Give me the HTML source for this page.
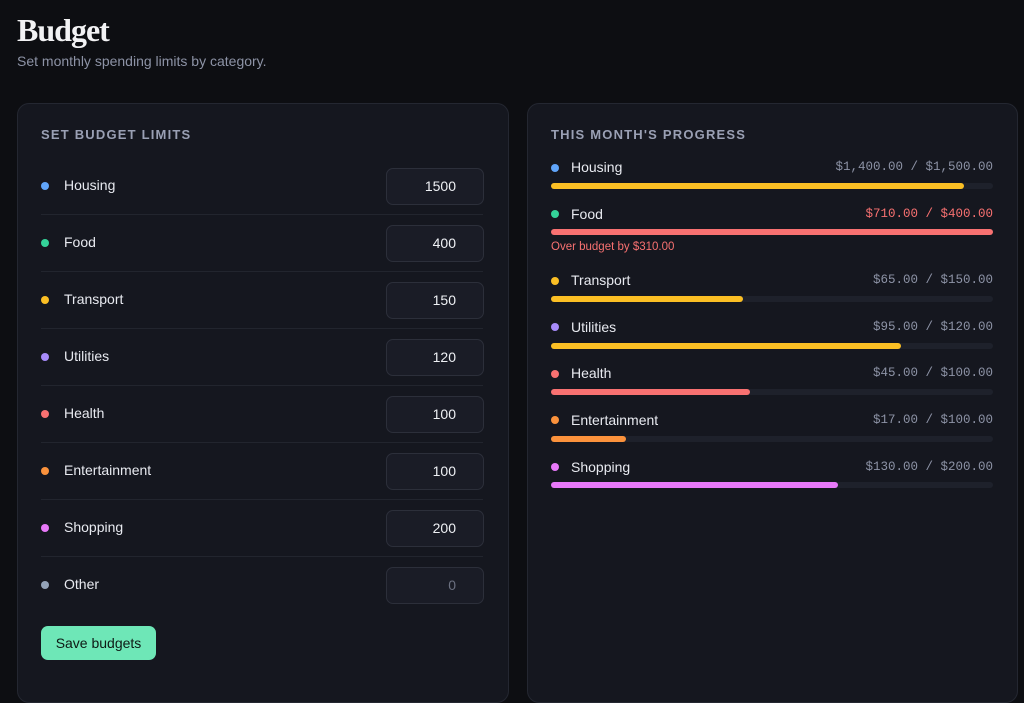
<!DOCTYPE html>
<html><head><style>
*{box-sizing:border-box;margin:0;padding:0}
body{width:1024px;height:678px;overflow:hidden;background:#0d0e12;font-family:"Liberation Sans",sans-serif;color:#e6e8ee;position:relative}
.abs{position:absolute}
h1{position:absolute;left:17px;top:12px;font-family:"Liberation Serif",serif;font-size:32px;font-weight:bold;letter-spacing:-1px;color:#f2f2f4}
.sub{left:17px;top:53px;font-size:14px;color:#8d93a6}
.card{position:absolute;top:103px;height:600px;background:#15171f;border:1px solid #242731;border-radius:12px}
.ttl{position:absolute;font-size:13px;font-weight:bold;letter-spacing:1.2px;color:#9aa0b4}
.dot{position:absolute;width:8px;height:8px;border-radius:50%}
.lbl{position:absolute;font-size:14px;color:#e8eaf0}
.inp{position:absolute;left:386px;width:98px;height:37px;border:1px solid #2c2f3a;border-radius:7px;background:#1a1c26;text-align:right;padding-right:27px;line-height:35px;font-size:14px;color:#eef0f4}
.div{position:absolute;left:41px;width:442px;height:1px;background:#22252e}
.amt{position:absolute;right:31px;font-family:"Liberation Mono",monospace;font-size:12.5px;color:#8d93a6}
.track{position:absolute;left:551px;width:442px;height:6px;border-radius:3px;background:#1e212b}
.fill{height:6px;border-radius:3px}
.btn{position:absolute;left:41px;top:626px;width:115px;height:34px;border-radius:7px;background:#6ee7b7;color:#0e1a15;font-size:14px;text-align:center;line-height:34px}
</style></head><body>
<h1>Budget</h1>
<div class="abs sub">Set monthly spending limits by category.</div>
<div class="card" style="left:17px;width:492px"></div>
<div class="card" style="left:527px;width:491px"></div>
<div class="ttl" style="left:41px;top:127px">SET BUDGET LIMITS</div>
<div class="ttl" style="left:551px;top:127px">THIS MONTH'S PROGRESS</div>

<div class="dot" style="left:41px;top:182px;background:#60a5fa"></div><div class="lbl" style="left:64px;top:177px">Housing</div><div class="inp" style="top:168px">1500</div><div class="div" style="top:214px"></div>
<div class="dot" style="left:41px;top:239px;background:#34d399"></div><div class="lbl" style="left:64px;top:234px">Food</div><div class="inp" style="top:225px">400</div><div class="div" style="top:271px"></div>
<div class="dot" style="left:41px;top:296px;background:#fbbf24"></div><div class="lbl" style="left:64px;top:291px">Transport</div><div class="inp" style="top:282px">150</div><div class="div" style="top:328px"></div>
<div class="dot" style="left:41px;top:353px;background:#a78bfa"></div><div class="lbl" style="left:64px;top:348px">Utilities</div><div class="inp" style="top:339px">120</div><div class="div" style="top:385px"></div>
<div class="dot" style="left:41px;top:410px;background:#f87171"></div><div class="lbl" style="left:64px;top:405px">Health</div><div class="inp" style="top:396px">100</div><div class="div" style="top:442px"></div>
<div class="dot" style="left:41px;top:467px;background:#fb923c"></div><div class="lbl" style="left:64px;top:462px">Entertainment</div><div class="inp" style="top:453px">100</div><div class="div" style="top:499px"></div>
<div class="dot" style="left:41px;top:524px;background:#e879f9"></div><div class="lbl" style="left:64px;top:519px">Shopping</div><div class="inp" style="top:510px">200</div><div class="div" style="top:556px"></div>
<div class="dot" style="left:41px;top:581px;background:#94a3b8"></div><div class="lbl" style="left:64px;top:576px">Other</div><div class="inp" style="top:567px;color:#6b7080">0</div>
<div class="btn">Save budgets</div>

<div class="dot" style="left:551px;top:164px;background:#60a5fa"></div><div class="lbl" style="left:571px;top:159px">Housing</div><div class="amt" style="top:160px">$1,400.00 / $1,500.00</div>
<div class="track" style="top:183px"><div class="fill" style="width:413px;background:#fbbf24"></div></div>
<div class="dot" style="left:551px;top:210px;background:#34d399"></div><div class="lbl" style="left:571px;top:206px">Food</div><div class="amt" style="top:207px;color:#f87171">$710.00 / $400.00</div>
<div class="track" style="top:229px"><div class="fill" style="width:442px;background:#f87171"></div></div>
<div class="abs" style="left:551px;top:241px;font-size:11.5px;color:#f87171">Over budget by $310.00</div>
<div class="dot" style="left:551px;top:277px;background:#fbbf24"></div><div class="lbl" style="left:571px;top:272px">Transport</div><div class="amt" style="top:273px">$65.00 / $150.00</div>
<div class="track" style="top:296px"><div class="fill" style="width:192px;background:#fbbf24"></div></div>
<div class="dot" style="left:551px;top:323px;background:#a78bfa"></div><div class="lbl" style="left:571px;top:319px">Utilities</div><div class="amt" style="top:320px">$95.00 / $120.00</div>
<div class="track" style="top:343px"><div class="fill" style="width:350px;background:#fbbf24"></div></div>
<div class="dot" style="left:551px;top:370px;background:#f87171"></div><div class="lbl" style="left:571px;top:365px">Health</div><div class="amt" style="top:366px">$45.00 / $100.00</div>
<div class="track" style="top:389px"><div class="fill" style="width:199px;background:#f87171"></div></div>
<div class="dot" style="left:551px;top:416px;background:#fb923c"></div><div class="lbl" style="left:571px;top:412px">Entertainment</div><div class="amt" style="top:413px">$17.00 / $100.00</div>
<div class="track" style="top:436px"><div class="fill" style="width:75px;background:#fb923c"></div></div>
<div class="dot" style="left:551px;top:463px;background:#e879f9"></div><div class="lbl" style="left:571px;top:459px">Shopping</div><div class="amt" style="top:460px">$130.00 / $200.00</div>
<div class="track" style="top:482px"><div class="fill" style="width:287px;background:#e879f9"></div></div>
</body></html>
